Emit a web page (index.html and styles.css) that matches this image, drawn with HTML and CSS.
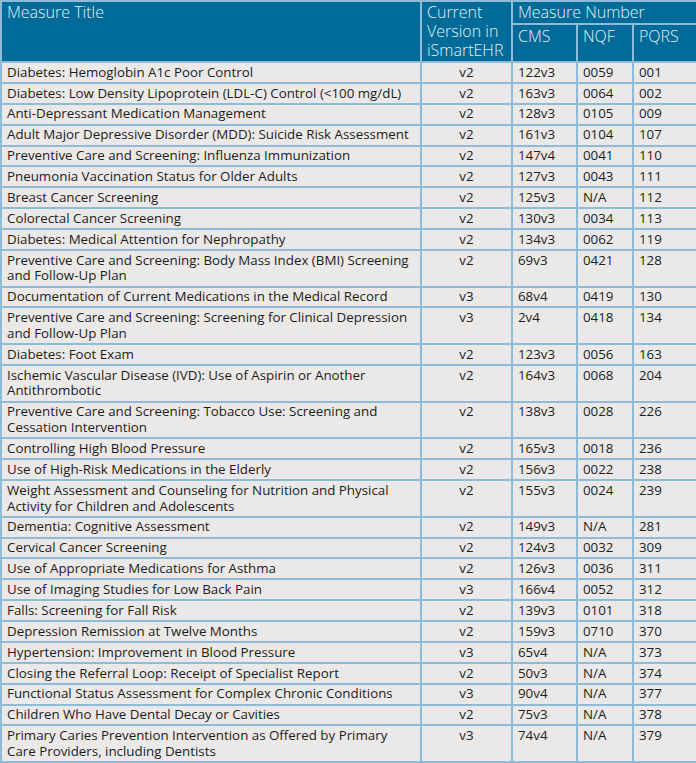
FILE: index.html
```html
<!DOCTYPE html>
<html>
<head>
<meta charset="utf-8">
<link rel="stylesheet" href="styles.css">
</head>
<body>
<table class="measures">
  <colgroup>
    <col class="c-title"><col class="c-ver"><col class="c-cms"><col class="c-nqf"><col class="c-pqrs">
  </colgroup>
  <thead>
    <tr>
      <th rowspan="2">Measure Title</th>
      <th rowspan="2">Current Version in iSmartEHR</th>
      <th colspan="3" class="grp">Measure Number</th>
    </tr>
    <tr>
      <th class="sub">CMS</th>
      <th class="sub">NQF</th>
      <th class="sub">PQRS</th>
    </tr>
  </thead>
  <tbody>
    <tr><td>Diabetes: Hemoglobin A1c Poor Control</td><td class="ver">v2</td><td>122v3</td><td>0059</td><td>001</td></tr>
    <tr><td>Diabetes: Low Density Lipoprotein (LDL-C) Control (&lt;100 mg/dL)</td><td class="ver">v2</td><td>163v3</td><td>0064</td><td>002</td></tr>
    <tr><td>Anti-Depressant Medication Management</td><td class="ver">v2</td><td>128v3</td><td>0105</td><td>009</td></tr>
    <tr><td>Adult Major Depressive Disorder (MDD): Suicide Risk Assessment</td><td class="ver">v2</td><td>161v3</td><td>0104</td><td>107</td></tr>
    <tr><td>Preventive Care and Screening: Influenza Immunization</td><td class="ver">v2</td><td>147v4</td><td>0041</td><td>110</td></tr>
    <tr><td>Pneumonia Vaccination Status for Older Adults</td><td class="ver">v2</td><td>127v3</td><td>0043</td><td>111</td></tr>
    <tr><td>Breast Cancer Screening</td><td class="ver">v2</td><td>125v3</td><td>N/A</td><td>112</td></tr>
    <tr><td>Colorectal Cancer Screening</td><td class="ver">v2</td><td>130v3</td><td>0034</td><td>113</td></tr>
    <tr><td>Diabetes: Medical Attention for Nephropathy</td><td class="ver">v2</td><td>134v3</td><td>0062</td><td>119</td></tr>
    <tr><td>Preventive Care and Screening: Body Mass Index (BMI) Screening and Follow-Up Plan</td><td class="ver">v2</td><td>69v3</td><td>0421</td><td>128</td></tr>
    <tr><td>Documentation of Current Medications in the Medical Record</td><td class="ver">v3</td><td>68v4</td><td>0419</td><td>130</td></tr>
    <tr><td>Preventive Care and Screening: Screening for Clinical Depression and Follow-Up Plan</td><td class="ver">v3</td><td>2v4</td><td>0418</td><td>134</td></tr>
    <tr><td>Diabetes: Foot Exam</td><td class="ver">v2</td><td>123v3</td><td>0056</td><td>163</td></tr>
    <tr><td>Ischemic Vascular Disease (IVD): Use of Aspirin or Another Antithrombotic</td><td class="ver">v2</td><td>164v3</td><td>0068</td><td>204</td></tr>
    <tr><td>Preventive Care and Screening: Tobacco Use: Screening and Cessation Intervention</td><td class="ver">v2</td><td>138v3</td><td>0028</td><td>226</td></tr>
    <tr><td>Controlling High Blood Pressure</td><td class="ver">v2</td><td>165v3</td><td>0018</td><td>236</td></tr>
    <tr><td>Use of High-Risk Medications in the Elderly</td><td class="ver">v2</td><td>156v3</td><td>0022</td><td>238</td></tr>
    <tr><td>Weight Assessment and Counseling for Nutrition and Physical Activity for Children and Adolescents</td><td class="ver">v2</td><td>155v3</td><td>0024</td><td>239</td></tr>
    <tr><td>Dementia: Cognitive Assessment</td><td class="ver">v2</td><td>149v3</td><td>N/A</td><td>281</td></tr>
    <tr><td>Cervical Cancer Screening</td><td class="ver">v2</td><td>124v3</td><td>0032</td><td>309</td></tr>
    <tr><td>Use of Appropriate Medications for Asthma</td><td class="ver">v2</td><td>126v3</td><td>0036</td><td>311</td></tr>
    <tr><td>Use of Imaging Studies for Low Back Pain</td><td class="ver">v3</td><td>166v4</td><td>0052</td><td>312</td></tr>
    <tr><td>Falls: Screening for Fall Risk</td><td class="ver">v2</td><td>139v3</td><td>0101</td><td>318</td></tr>
    <tr><td>Depression Remission at Twelve Months</td><td class="ver">v2</td><td>159v3</td><td>0710</td><td>370</td></tr>
    <tr><td>Hypertension: Improvement in Blood Pressure</td><td class="ver">v3</td><td>65v4</td><td>N/A</td><td>373</td></tr>
    <tr><td>Closing the Referral Loop: Receipt of Specialist Report</td><td class="ver">v2</td><td>50v3</td><td>N/A</td><td>374</td></tr>
    <tr><td>Functional Status Assessment for Complex Chronic Conditions</td><td class="ver">v3</td><td>90v4</td><td>N/A</td><td>377</td></tr>
    <tr><td>Children Who Have Dental Decay or Cavities</td><td class="ver">v2</td><td>75v3</td><td>N/A</td><td>378</td></tr>
    <tr><td>Primary Caries Prevention Intervention as Offered by Primary Care Providers, including Dentists</td><td class="ver">v3</td><td>74v4</td><td>N/A</td><td>379</td></tr>
  </tbody>
</table>
</body>
</html>
```

FILE: styles.css
```css
html, body {
  margin: 0;
  padding: 0;
  background: #ffffff;
}

.measures {
  width: 696px;
  border-collapse: collapse;
  table-layout: fixed;
  font-family: "Open Sans", "DejaVu Sans", sans-serif;
  font-size: 13.33px;
  color: #1c1c1c;
}

.c-title { width: 420px; }
.c-ver { width: 91px; }
.c-cms { width: 65px; }
.c-nqf { width: 56px; }
.c-pqrs { width: 64px; }

.measures th,
.measures td {
  border: 2px solid #8dbbd8;
}

.measures th {
  background: #006b99;
  color: #e6f0f5;
  font-weight: 300;
  font-size: 16px;
  line-height: 19px;
  text-align: left;
  vertical-align: top;
  padding: 1px 5px 1px 5px;
}

.measures th.grp {
  height: 18px;
}

.measures th.sub {
  padding-top: 2px;
}

.measures td {
  background: #ebe9e7;
  line-height: 15.8px;
  padding: 1.7px 5px 1.4px 5px;
  vertical-align: top;
}

.measures td.ver {
  text-align: center;
}
```
